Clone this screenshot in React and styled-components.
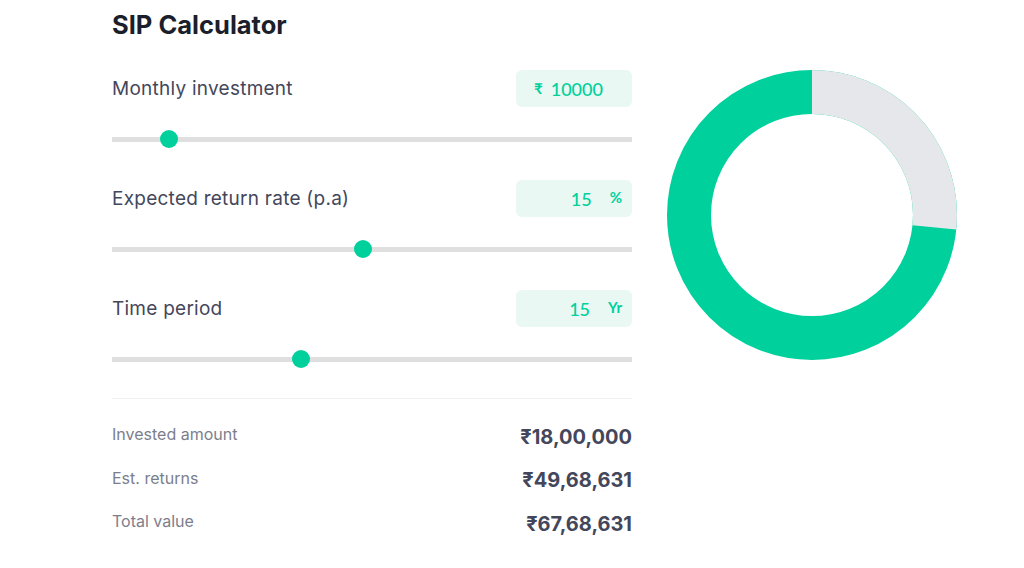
import React, { useState } from 'react';
import styled, { createGlobalStyle } from 'styled-components';

const GlobalStyle = createGlobalStyle`
  body {
    margin: 0;
    background: #ffffff;
    font-family: Inter, "Noto Sans", sans-serif;
  }
`;

const Page = styled.div`
  display: flex;
  align-items: flex-start;
  gap: 35px;
  padding: 9px 0 0 112px;
`;

const Calculator = styled.div`
  width: 520px;
  display: flex;
  flex-direction: column;
`;

const Title = styled.h1`
  margin: 0 0 29px 0;
  font-size: 25.5px;
  line-height: 32px;
  font-weight: 700;
  color: #1b1f2b;
`;

const Field = styled.div`
  display: flex;
  flex-direction: column;
  margin-bottom: 32px;
`;

const FieldRow = styled.div`
  display: flex;
  align-items: center;
  justify-content: space-between;
  height: 37px;
`;

const Label = styled.span`
  font-size: 19px;
  letter-spacing: 0.25px;
  color: #44475b;
`;

const ValueBox = styled.div`
  width: 116px;
  height: 37px;
  box-sizing: border-box;
  border-radius: 6px;
  background: #e9f8f3;
  display: flex;
  align-items: center;
  justify-content: ${({ $prefix }) => ($prefix ? 'flex-start' : 'flex-end')};
  padding: ${({ $prefix }) => ($prefix ? '0 0 0 18px' : '0 10px 0 0')};
  color: #00d09c;
  font-family: Lato, "Noto Sans", sans-serif;
  font-size: 18px;
  font-weight: 500;
`;

const Unit = styled.span`
  font-size: 15px;
  font-weight: 700;
  margin: ${({ $before }) => ($before ? '0 8px 1px 0' : '0 0 4px 18px')};
`;

const Slider = styled.input`
  -webkit-appearance: none;
  appearance: none;
  width: 520px;
  height: 18px;
  margin: 23px 0 0 0;
  background: transparent;
  &::-webkit-slider-runnable-track {
    height: 5px;
    background: #dfdfdf;
    border-radius: 0;
  }
  &::-webkit-slider-thumb {
    -webkit-appearance: none;
    width: 18px;
    height: 18px;
    margin-top: -6.5px;
    border-radius: 50%;
    background: #00d09c;
    border: none;
  }
  &::-moz-range-track {
    height: 5px;
    background: #dfdfdf;
  }
  &::-moz-range-thumb {
    width: 18px;
    height: 18px;
    border-radius: 50%;
    background: #00d09c;
    border: none;
  }
`;

const Divider = styled.hr`
  border: none;
  border-top: 1px solid #f1f1f1;
  margin: -2px 0 16px 0;
`;

const Result = styled.div`
  display: flex;
  align-items: center;
  justify-content: space-between;
  height: 43.5px;
`;

const ResultLabel = styled.span`
  font-size: 16px;
  color: #7c7e8c;
  margin-bottom: 5px;
`;

const ResultValue = styled.span`
  font-size: 20px;
  font-weight: 700;
  color: #44475b;
`;

const Chart = styled.div`
  margin-top: 61px;
  width: 290px;
  height: 290px;
`;

const fmt = (n) => '₹' + Math.round(n).toLocaleString('en-IN');

const fields = [
  { key: 'monthly', label: 'Monthly investment', min: 500, max: 100000, step: 500, prefix: '₹' },
  { key: 'rate', label: 'Expected return rate (p.a)', min: 1, max: 30, step: 0.1, suffix: '%' },
  { key: 'years', label: 'Time period', min: 1, max: 40, step: 1, suffix: 'Yr' },
];

const Donut = ({ invested, total }) => {
  const r = 123;
  const c = 2 * Math.PI * r;
  const share = invested / total;
  return (
    <svg width="290" height="290" viewBox="0 0 290 290">
      <circle cx="145" cy="145" r={r} fill="none" stroke="#00d09c" strokeWidth="44" />
      <circle
        cx="145"
        cy="145"
        r={r}
        fill="none"
        stroke="#e6e7eb"
        strokeWidth="44"
        strokeDasharray={`${c * share} ${c}`}
        transform="rotate(-90 145 145)"
      />
    </svg>
  );
};

const App = () => {
  const [values, setValues] = useState({ monthly: 10000, rate: 15, years: 15 });

  const invested = values.monthly * 12 * values.years;
  const total = 6768631;
  const returns = total - invested;

  return (
    <>
      <GlobalStyle />
      <Page>
        <Calculator>
          <Title>SIP Calculator</Title>
          {fields.map((f) => (
            <Field key={f.key}>
              <FieldRow>
                <Label>{f.label}</Label>
                <ValueBox $prefix={!!f.prefix}>
                  {f.prefix && <Unit $before>{f.prefix}</Unit>}
                  {values[f.key]}
                  {f.suffix && <Unit>{f.suffix}</Unit>}
                </ValueBox>
              </FieldRow>
              <Slider
                type="range"
                min={f.min}
                max={f.max}
                step={f.step}
                value={values[f.key]}
                onChange={(e) => setValues({ ...values, [f.key]: Number(e.target.value) })}
              />
            </Field>
          ))}
          <Divider />
          <Result>
            <ResultLabel>Invested amount</ResultLabel>
            <ResultValue>{fmt(invested)}</ResultValue>
          </Result>
          <Result>
            <ResultLabel>Est. returns</ResultLabel>
            <ResultValue>{fmt(returns)}</ResultValue>
          </Result>
          <Result>
            <ResultLabel>Total value</ResultLabel>
            <ResultValue>{fmt(total)}</ResultValue>
          </Result>
        </Calculator>
        <Chart>
          <Donut invested={invested} total={total} />
        </Chart>
      </Page>
    </>
  );
};

export default App;
